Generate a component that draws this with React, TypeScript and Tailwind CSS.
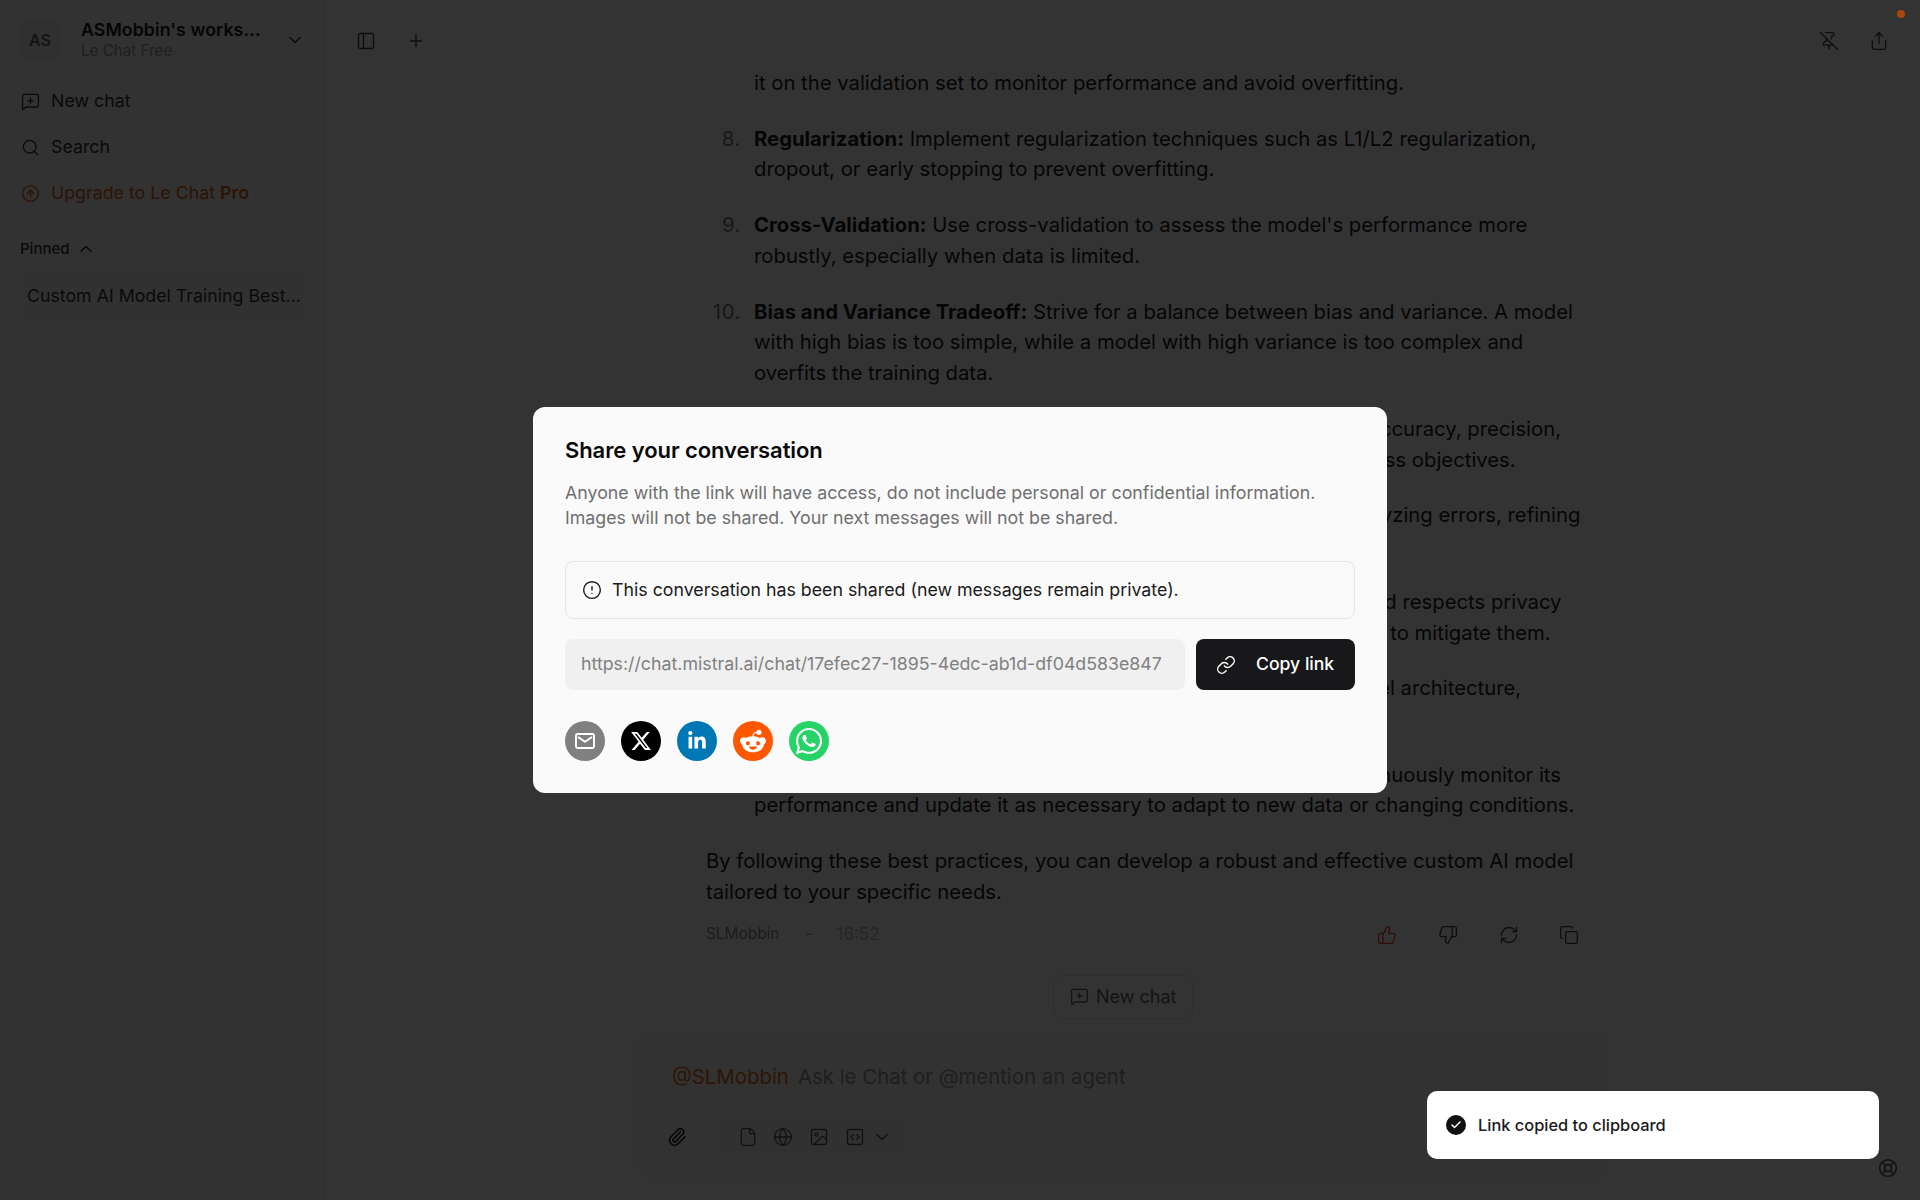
import { MessageSquarePlus, Search, CircleArrowUp, ChevronUp, ChevronDown, PanelLeft, Plus, PinOff, Share, ThumbsUp, ThumbsDown, RefreshCw, Copy, Paperclip, File, Globe, Image, SquareCode, Link, CircleAlert, LifeBuoy, Check } from "lucide-react";
import { FaXTwitter, FaLinkedinIn, FaRedditAlien, FaWhatsapp } from "react-icons/fa6";

const items: [string, string, string[]][] = [
  ["8.", "Regularization:", [" Implement regularization techniques such as L1/L2 regularization,", "dropout, or early stopping to prevent overfitting."]],
  ["9.", "Cross-Validation:", [" Use cross-validation to assess the model's performance more", "robustly, especially when data is limited."]],
  ["10.", "Bias and Variance Tradeoff:", [" Strive for a balance between bias and variance. A model", "with high bias is too simple, while a model with high variance is too complex and", "overfits the training data."]],
  ["11.", "Model Evaluation:", [" Use relevant metrics for your tasks, such as: accuracy, precision,", "recall, and F1-score, to ensure the model really meets your business objectives."]],
  ["12.", "Iterative Improvement:", [" Continuously improve your model by analyzing errors, refining", "features, and adjusting hyperparameters."]],
  ["13.", "Ethics and Fairness:", [" Ensure that your model is fair, not biased, and respects privacy", "by identifying any potential risks and biases and then taking steps to mitigate them."]],
  ["14.", "Documentation:", [" Maintain clear documentation of your data, model architecture,", "training process, and the evaluation results for future reference."]],
  ["15.", "Deployment and Monitoring:", [" Once deployed to production, continuously monitor its", "performance and update it as necessary to adapt to new data or changing conditions."]],
];

function Sidebar() {
  return (
    <aside className="w-[325px] shrink-0 border-r border-[#e8e8e8] bg-[#f7f7f7] flex flex-col">
      <div className="flex items-center pl-5 pr-[20px] pt-5 h-[40px] box-content">
        <div className="w-10 h-10 rounded-lg bg-[#f0f0f0] flex items-center justify-center text-[16px] font-semibold text-[#666]">AS</div>
        <div className="ml-[21px] flex flex-col flex-1">
          <span className="text-[17.7px] leading-[22px] font-semibold text-[#1a1a1a] tracking-[0.1px]">ASMobbin's works...</span>
          <span className="text-[15.2px] leading-[20px] text-[#9a9a9a]">Le Chat Free</span>
        </div>
        <ChevronDown className="w-5 h-5 text-[#333] mb-[1px] mr-[-1px]" strokeWidth={1.8} />
      </div>
      <nav className="mt-[18px] flex flex-col px-[21px] text-[17.8px] text-[#333]">
        <div className="h-[46px] flex items-center gap-[11px]"><MessageSquarePlus className="w-[19px] h-[19px]" strokeWidth={1.7} />New chat</div>
        <div className="h-[46px] flex items-center gap-[11px]"><Search className="w-[19px] h-[19px]" strokeWidth={1.7} />Search</div>
        <div className="h-[46px] flex items-center gap-[11px] text-[#e0631c]"><CircleArrowUp className="w-[19px] h-[19px]" strokeWidth={1.7} /><span>Upgrade to Le Chat <span className="font-semibold">Pro</span></span></div>
      </nav>
      <div className="mt-[21px] px-[20px] flex items-center gap-[6px] text-[15px] font-medium text-[#333] leading-[24px]">Pinned <ChevronUp className="w-5 h-5" strokeWidth={1.7} /></div>
      <div className="mt-[12px] mx-[18px] h-[46px] rounded-lg bg-[#f3f3f3] flex items-center px-[9px] text-[17.75px] text-[#333] whitespace-nowrap">Custom AI Model Training Best...</div>
    </aside>
  );
}

function Main() {
  return (
    <main className="flex-1 flex flex-col min-w-0 bg-white font-normal">
      <header className="h-[64px] shrink-0 flex items-end pb-[13px] text-[#444]">
        <PanelLeft className="ml-[31px] w-5 h-5" strokeWidth={1.6} />
        <Plus className="ml-[30px] w-5 h-5" strokeWidth={1.6} />
        <div className="flex-1" />
        <PinOff className="w-5 h-5 mr-[30px]" strokeWidth={1.6} />
        <Share className="w-5 h-5 mr-[31px]" strokeWidth={1.6} />
      </header>
      <div className="flex-1 min-h-0 overflow-hidden flex flex-col">
        <div className="ml-[380px] w-[885px] text-[20.3px] leading-[30.6px] text-[#1a1a1a] pt-[4px]">
          <div className="pl-[49px] mb-[25.3px] whitespace-nowrap">it on the validation set to monitor performance and avoid overfitting.</div>
          {items.map(([n, b, lines]) => (
            <div key={n} className="flex mb-[25.3px] whitespace-nowrap">
              <div className="w-[36px] text-right text-[#777] shrink-0 tracking-[0.6px]">{n}</div>
              <div className="ml-[13px]">
                <strong className="font-bold">{b}</strong>{lines[0]}
                {lines.slice(1).map((l) => <div key={l}>{l}</div>)}
              </div>
            </div>
          ))}
          <div className="whitespace-nowrap ml-[1px]">By following these best practices, you can develop a robust and effective custom AI model<br />tailored to your specific needs.</div>
          <div className="mt-[11px] ml-[1px] h-[32px] flex items-center text-[15.4px] text-[#888]">
            <span>SLMobbin</span>
            <span className="ml-[26px]">-</span>
            <span className="ml-[24px] text-[17px] text-[#bbb]">16:52</span>
            <div className="flex-1" />
            <ThumbsUp className="w-5 h-5 text-[#e0401c]" strokeWidth={1.6} />
            <ThumbsDown className="w-5 h-5 ml-[41px] text-[#444]" strokeWidth={1.6} />
            <RefreshCw className="w-5 h-5 ml-[41px] text-[#444]" strokeWidth={1.6} />
            <Copy className="w-5 h-5 ml-[40px] mr-[11px] text-[#444]" strokeWidth={1.6} />
          </div>
        </div>
        <div className="ml-[728px] mt-[24px] w-[140px] h-[44px] rounded-lg border border-[#e6e6e6] flex items-center pl-[16px] gap-[7px] text-[18px] text-[#666]">
          <MessageSquarePlus className="w-[19px] h-[19px] shrink-0" strokeWidth={1.7} />New chat
        </div>
        <div className="ml-[312px] w-[971px] mt-[16px] h-[143px] rounded-xl bg-[#f7f7f7] pl-[35px] pt-[27px]">
          <div className="text-[20.4px] leading-[30px] whitespace-nowrap"><span className="text-[#f0681a]">@SLMobbin</span><span className="ml-[9px] text-[#999]">Ask le Chat or @mention an agent</span></div>
          <div className="mt-[26px] flex items-center text-[#444]">
            <Paperclip className="w-5 h-5 -ml-[5px] text-[#111]" strokeWidth={1.7} />
            <div className="ml-[33px] w-[183px] h-[38px] rounded-lg bg-[#f3f3f3] flex items-center pl-[18px] text-[#555]">
              <File className="w-5 h-5" strokeWidth={1.6} />
              <Globe className="w-5 h-5 ml-[15px]" strokeWidth={1.6} />
              <Image className="w-5 h-5 ml-[16px]" strokeWidth={1.6} />
              <SquareCode className="w-5 h-5 ml-[16px]" strokeWidth={1.6} />
              <ChevronDown className="w-5 h-5 ml-[7px]" strokeWidth={1.7} />
            </div>
          </div>
        </div>
      </div>
    </main>
  );
}

function Social({ bg, children }: { bg: string; children: React.ReactNode }) {
  return <div className={`w-10 h-10 rounded-full flex items-center justify-center text-white ${bg}`}>{children}</div>;
}

function Modal() {
  return (
    <div className="absolute inset-0 bg-black/80 flex items-center justify-center">
      <div className="w-[854px] h-[386px] rounded-xl bg-[#fafafa] p-8">
        <h2 className="text-[22px] leading-[24px] font-semibold text-[#0a0a0a] tracking-[-0.08px] -mt-[1px]">Share your conversation</h2>
        <p className="mt-[18px] text-[17.8px] leading-[25px] text-[#6f6f6f]">Anyone with the link will have access, do not include personal or confidential information.<br />Images will not be shared. Your next messages will not be shared.</p>
        <div className="mt-[31px] h-[58px] rounded-lg border border-[#e5e5e5] flex items-center pl-[16px] text-[17.77px] text-[#1a1a1a]">
          <CircleAlert className="w-5 h-5 mr-[10px] shrink-0" strokeWidth={1.7} />This conversation has been shared (new messages remain private).
        </div>
        <div className="mt-[20px] flex gap-[11px]">
          <div className="w-[620px] h-[51px] rounded-lg bg-[#f0f0f0] flex items-center pl-[16px] text-[17.77px] text-[#808080] whitespace-nowrap">https://chat.mistral.ai/chat/17efec27-1895-4edc-ab1d-df04d583e847</div>
          <div className="w-[159px] h-[51px] rounded-lg bg-[#18181a] flex items-center pl-[20px] gap-[20px] text-[17.6px] font-medium text-white">
            <Link className="w-5 h-5" strokeWidth={1.7} />Copy link
          </div>
        </div>
        <div className="mt-[31px] flex gap-4">
          <Social bg="bg-[#808080]">
            <svg viewBox="0 0 24 24" className="w-[24px] h-[24px]" fill="none"><rect x="3" y="5" width="18" height="14" rx="1.5" stroke="white" strokeWidth="1.9" /><path d="M5 8l7 4.8L19 8" stroke="white" strokeWidth="1.9" strokeLinejoin="round" /></svg>
          </Social>
          <Social bg="bg-black"><FaXTwitter className="w-[22px] h-[22px]" /></Social>
          <Social bg="bg-[#0077b5]"><FaLinkedinIn className="w-[20px] h-[20px]" /></Social>
          <Social bg="bg-[#ff5700]"><FaRedditAlien className="w-[26px] h-[26px]" /></Social>
          <Social bg="bg-[#25d366]"><FaWhatsapp className="w-[30px] h-[30px]" /></Social>
        </div>
      </div>
    </div>
  );
}

export default function App() {
  return (
    <div className="relative w-[1920px] h-[1200px] overflow-hidden flex bg-white" style={{ fontFamily: "Inter, sans-serif" }}>
      <Sidebar />
      <Main />
      <Modal />
      <div className="absolute top-[10px] left-[1897px] w-2 h-2 rounded-full bg-[#a8470c]" />
      <LifeBuoy className="absolute left-[1878px] top-[1158px] w-5 h-5 text-[#111]" strokeWidth={1.7} />
      <div className="absolute left-[1427px] top-[1091px] w-[452px] h-[68px] rounded-[10px] bg-white flex items-center pl-[19px] gap-[12px] text-[16.4px] font-medium text-[#1a1a1a]">
        <div className="w-5 h-5 rounded-full bg-[#111] flex items-center justify-center"><Check className="w-3 h-3 text-white" strokeWidth={3} /></div>
        Link copied to clipboard
      </div>
    </div>
  );
}
